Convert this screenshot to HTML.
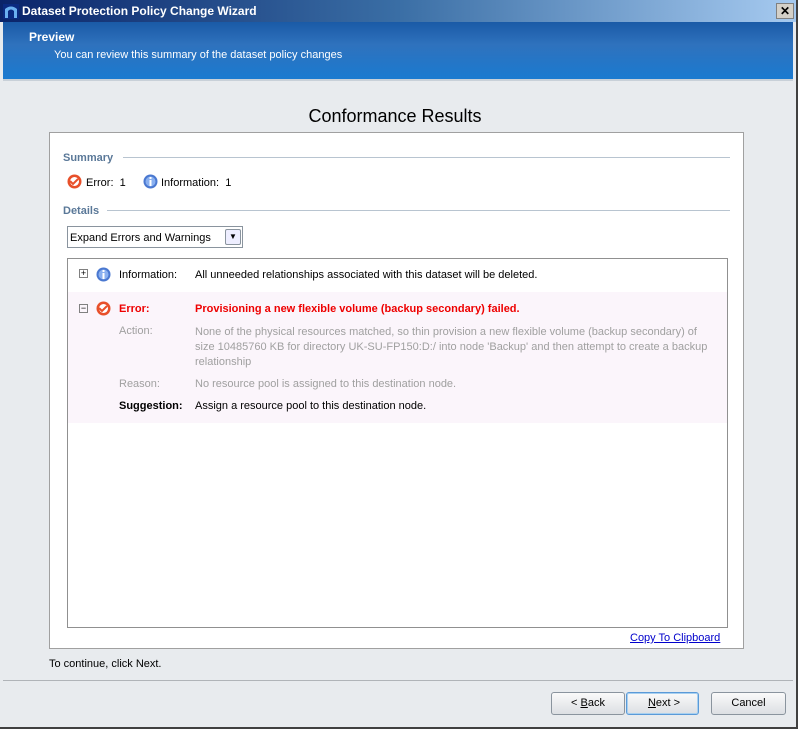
<!DOCTYPE html>
<html><head><style>
body{margin:0;width:798px;height:729px;overflow:hidden;background:#808080;font-family:"Liberation Sans",sans-serif;font-size:11px;}
.win{position:absolute;left:0;top:0;width:796px;height:727px;background:#e8ebee;border-right:2px solid #404040;border-bottom:2px solid #404040;}
.tb{position:absolute;left:0;top:0;width:796px;height:22px;background:linear-gradient(90deg,#0a246a,#3a6ea5 50%,#a6caf0);color:#fff;font-weight:bold;font-size:12px;}
.banner{position:absolute;left:3px;top:22px;width:790px;height:57px;background:linear-gradient(#1a5aa6,#2f72bd 40%,#1a7ad0);border-bottom:2px solid #c8d0d8;color:#fff;}
.abs{position:absolute;}
.panel{position:absolute;left:49px;top:132px;width:693px;height:515px;background:#fff;border:1px solid #a0a0a0;}
.sec{color:#5a7898;font-weight:bold;font-size:11px;}
.line{position:absolute;height:1px;background:#b8c4d0;}
.list{position:absolute;left:17px;top:125px;width:659px;height:368px;border:1px solid #909090;background:#fff;}
.gray{color:#a0a0a0;}
.btn{position:absolute;top:692px;height:21px;border:1px solid #8a949e;border-radius:3px;background:linear-gradient(#fafafa,#dcdfe3);text-align:center;line-height:21px;font-size:11px;}
.pm{position:absolute;width:7px;height:7px;border:1px solid #808080;font-size:9px;line-height:7px;text-align:center;color:#000;}
</style></head><body>
<div class="win">
<div class="tb"><svg class="abs" style="left:3px;top:4px" width="16" height="15"><rect width="16" height="15" fill="#0a2a80"/><path d="M2 14V5Q8 0 14 5V14H11V7Q8 4 5 7V14Z" fill="#6ab0f0"/></svg><span class="abs" style="left:22px;top:4px">Dataset Protection Policy Change Wizard</span>
<div class="abs" style="left:776px;top:3px;width:16px;height:14px;background:#d4d0c8;border:1px solid #808080;color:#000;text-align:center;line-height:14px;font-size:12px;">✕</div></div>
<div class="banner"><span class="abs" style="left:26px;top:8px;font-weight:bold;font-size:12px">Preview</span><span class="abs" style="left:51px;top:27px">You can review this summary of the dataset policy changes</span></div>
<div class="abs" style="left:0;top:106px;width:790px;text-align:center;font-size:18px;color:#000">Conformance Results</div>
<div class="panel">
<span class="abs sec" style="left:13px;top:19px">Summary</span><div class="line" style="left:73px;top:24px;width:607px"></div>
<svg class="abs" style="left:17px;top:41px" width="15" height="15"><circle cx="7.5" cy="7.5" r="7" fill="#e8502a"/><circle cx="7.5" cy="7.5" r="4.5" fill="#fff"/><path d="M3 7l3 3 5-5" stroke="#e8502a" stroke-width="2" fill="none"/></svg>
<span class="abs" style="left:36px;top:44px">Error:&nbsp; 1</span>
<svg class="abs" style="left:93px;top:41px" width="15" height="15"><circle cx="7.5" cy="7.5" r="7" fill="#4a78d0"/><circle cx="7.5" cy="7.5" r="5" fill="#8ab0f0"/><rect x="6.5" y="6" width="2" height="6" fill="#fff"/><rect x="6.5" y="3" width="2" height="2" fill="#fff"/></svg>
<span class="abs" style="left:111px;top:44px">Information:&nbsp; 1</span>
<span class="abs sec" style="left:13px;top:72px">Details</span><div class="line" style="left:57px;top:77px;width:623px"></div>
<div class="abs" style="left:17px;top:93px;width:174px;height:20px;border:1px solid #8a949e;background:#fff"><span class="abs" style="left:2px;top:5px">Expand Errors and Warnings</span><div class="abs" style="left:157px;top:2px;width:14px;height:14px;border:1px solid #8a949e;border-radius:2px;background:#eef;font-size:8px;text-align:center;line-height:14px">▼</div></div>
<div class="list">
<div class="pm" style="left:11px;top:10px">+</div>
<svg class="abs" style="left:28px;top:8px" width="15" height="15"><circle cx="7.5" cy="7.5" r="7" fill="#4a78d0"/><circle cx="7.5" cy="7.5" r="5" fill="#8ab0f0"/><rect x="6.5" y="6" width="2" height="6" fill="#fff"/><rect x="6.5" y="3" width="2" height="2" fill="#fff"/></svg>
<span class="abs" style="left:51px;top:10px">Information:</span>
<span class="abs" style="left:127px;top:10px">All unneeded relationships associated with this dataset will be deleted.</span>
<div class="abs" style="left:0;top:33px;width:659px;height:131px;background:#fbf5fb">
<div class="pm" style="left:11px;top:12px">−</div>
<svg class="abs" style="left:28px;top:9px" width="15" height="15"><circle cx="7.5" cy="7.5" r="7" fill="#e8502a"/><circle cx="7.5" cy="7.5" r="4.5" fill="#fff"/><path d="M3 7l3 3 5-5" stroke="#e8502a" stroke-width="2" fill="none"/></svg>
<span class="abs" style="left:51px;top:11px;color:#e00;font-weight:bold">Error:</span>
<span class="abs" style="left:127px;top:11px;color:#e00;font-weight:bold">Provisioning a new flexible volume (backup secondary) failed.</span>
<span class="abs gray" style="left:51px;top:33px">Action:</span>
<span class="abs gray" style="left:127px;top:33px;width:520px;line-height:15px">None of the physical resources matched, so thin provision a new flexible volume (backup secondary) of size 10485760 KB for directory UK-SU-FP150:D:/ into node 'Backup' and then attempt to create a backup relationship</span>
<span class="abs gray" style="left:51px;top:86px">Reason:</span>
<span class="abs gray" style="left:127px;top:86px">No resource pool is assigned to this destination node.</span>
<span class="abs" style="left:51px;top:108px;font-weight:bold">Suggestion:</span>
<span class="abs" style="left:127px;top:108px">Assign a resource pool to this destination node.</span>
</div></div>
<span class="abs" style="left:580px;top:499px;color:#00c;text-decoration:underline">Copy To Clipboard</span>
</div>
<span class="abs" style="left:49px;top:658px">To continue, click Next.</span>
<div class="abs" style="left:3px;top:680px;width:790px;height:1px;background:#b0b4b8"></div>
<div class="btn" style="left:551px;width:72px">&lt; <u>B</u>ack</div>
<div class="btn" style="left:626px;width:71px;border:1px solid #5a9ad8;box-shadow:inset 0 0 0 1px #a8d0f0">&nbsp;<u>N</u>ext &gt;</div>
<div class="btn" style="left:711px;width:73px">Cancel</div>
</div>
</body></html>
